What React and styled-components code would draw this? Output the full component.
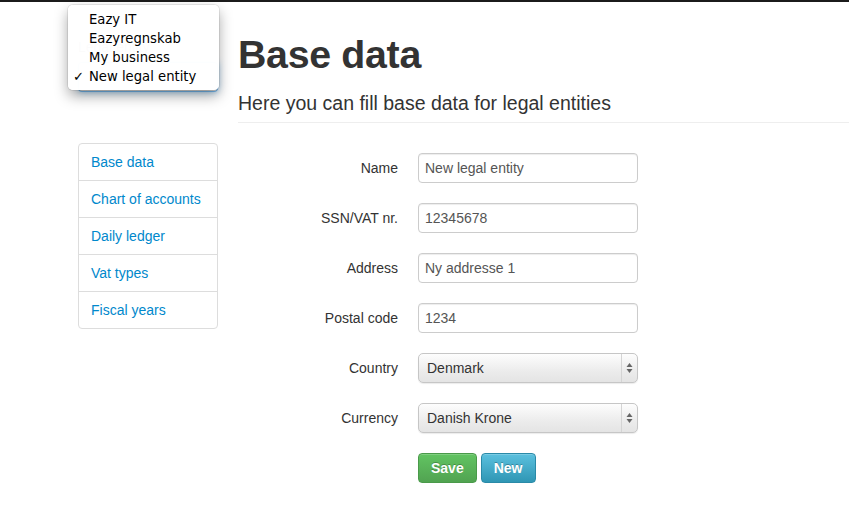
import styled, { createGlobalStyle } from 'styled-components';

const GlobalStyle = createGlobalStyle`
  html, body { margin: 0; padding: 0; background: #fff; }
  body {
    font-family: "Liberation Sans", Arial, sans-serif;
    font-size: 14px;
    line-height: 20px;
    color: #333;
    overflow: hidden;
  }
`;

const TopBar = styled.div`
  height: 2px;
  background: #1b1b1b;
`;

const Page = styled.div`
  display: flex;
  gap: 20px;
  padding-left: 78px;
`;

const Sidebar = styled.div`
  position: relative;
  width: 140px;
  flex: none;
  padding-top: 35px;
`;

const SideLabel = styled.div`
  color: #555;
  height: 20px;
  margin-bottom: 5px;
`;

const EntitySelect = styled.div`
  height: 30px;
  box-sizing: border-box;
  border: 1px solid rgba(82, 168, 236, 0.8);
  border-radius: 4px;
  background: linear-gradient(#fff, #e9e9e9);
  box-shadow: 0 0 6px rgba(82, 168, 236, 0.6);
`;

const Popup = styled.ul`
  position: absolute;
  left: -10px;
  top: 3px;
  width: 151px;
  box-sizing: border-box;
  margin: 0;
  padding: 5px 0 4px;
  list-style: none;
  background: rgba(255, 255, 255, 0.98);
  border-radius: 5px;
  box-shadow: 0 0 0 1px rgba(0, 0, 0, 0.08), 0 6px 14px rgba(0, 0, 0, 0.35);
  font-family: "DejaVu Sans", sans-serif;
  font-size: 13.2px;
  line-height: 19px;
  color: #000;
  z-index: 5;
`;

const PopupItem = styled.li`
  position: relative;
  padding-left: 21px;
  white-space: nowrap;
`;

const Check = styled.span`
  position: absolute;
  left: 5px;
  top: 0;
`;

const NavList = styled.ul`
  margin: 51px 0 0;
  padding: 0;
  list-style: none;
  border: 1px solid #ddd;
  border-radius: 4px;
  overflow: hidden;
`;

const NavItem = styled.li`
  border-top: ${p => (p.$first ? 'none' : '1px solid #ddd')};
  a {
    display: block;
    padding: 8px 12px;
    color: #0088cc;
    text-decoration: none;
  }
`;

const Main = styled.div`
  flex: 1;
  min-width: 0;
`;

const Header = styled.div`
  padding-top: 32px;
  padding-bottom: 7px;
  border-bottom: 1px solid #eee;
  margin-right: -20px;
`;

const Title = styled.h1`
  margin: 0;
  font-size: 39.3px;
  line-height: 40px;
  font-weight: bold;
  color: #333;
  letter-spacing: -0.3px;
`;

const Subtitle = styled.div`
  margin-top: 17px;
  font-size: 19.5px;
  line-height: 24px;
  color: #333;
`;

const Form = styled.form`
  margin-top: 30px;
`;

const Group = styled.div`
  display: flex;
  margin-bottom: 20px;
`;

const Label = styled.label`
  width: 160px;
  padding-top: 5px;
  margin-right: 20px;
  text-align: right;
  color: #333;
`;

const Input = styled.input`
  width: 220px;
  height: 30px;
  box-sizing: border-box;
  padding: 4px 6px;
  border: 1px solid #ccc;
  border-radius: 4px;
  box-shadow: inset 0 1px 1px rgba(0, 0, 0, 0.075);
  font-family: inherit;
  font-size: 14px;
  color: #555;
  outline: none;
`;

const Select = styled.div`
  width: 220px;
  height: 30px;
  box-sizing: border-box;
  display: flex;
  align-items: center;
  border: 1px solid #c6c6c6;
  border-radius: 5px;
  background: linear-gradient(#fdfdfd, #ececec 60%, #e4e4e4);
  box-shadow: 0 1px 1px rgba(0, 0, 0, 0.08);
  color: #333;
`;

const SelectValue = styled.span`
  flex: 1;
  padding-left: 8px;
`;

const Arrows = styled.span`
  width: 15px;
  height: 100%;
  border-left: 1px solid #d4d4d4;
  display: flex;
  align-items: center;
  justify-content: center;
`;

const Buttons = styled.div`
  display: flex;
  gap: 4px;
  margin-left: 180px;
`;

const Button = styled.button`
  height: 30px;
  box-sizing: border-box;
  padding: 4px 12px;
  font-family: inherit;
  font-size: 14px;
  font-weight: bold;
  color: #fff;
  text-shadow: 0 -1px 0 rgba(0, 0, 0, 0.25);
  border-radius: 4px;
  border: 1px solid ${p => (p.$variant === 'success' ? '#4a9a4a' : '#2a8aa8')};
  background: ${p =>
    p.$variant === 'success'
      ? 'linear-gradient(#62c462, #51a351)'
      : 'linear-gradient(#5bc0de, #2f96b4)'};
  box-shadow: inset 0 1px 0 rgba(255, 255, 255, 0.2);
`;

const SelectArrows = () => (
  <svg width="7" height="12" viewBox="0 0 7 12">
    <path d="M3.5 1 L6.5 5 H0.5 Z" fill="#666" />
    <path d="M3.5 11 L6.5 7 H0.5 Z" fill="#666" />
  </svg>
);

const fields = [
  { label: 'Name', value: 'New legal entity' },
  { label: 'SSN/VAT nr.', value: '12345678' },
  { label: 'Address', value: 'Ny addresse 1' },
  { label: 'Postal code', value: '1234' },
];

const selects = [
  { label: 'Country', value: 'Denmark' },
  { label: 'Currency', value: 'Danish Krone' },
];

const entities = ['Eazy IT', 'Eazyregnskab', 'My business', 'New legal entity'];
const nav = ['Base data', 'Chart of accounts', 'Daily ledger', 'Vat types', 'Fiscal years'];

const App = () => {
  return (
    <>
      <GlobalStyle />
      <TopBar />
      <Page>
        <Sidebar>
          <SideLabel>Legal entity</SideLabel>
          <EntitySelect />
          <Popup>
            {entities.map((e, i) => (
              <PopupItem key={e}>
                {i === entities.length - 1 && <Check>✓</Check>}
                {e}
              </PopupItem>
            ))}
          </Popup>
          <NavList>
            {nav.map((n, i) => (
              <NavItem key={n} $first={i === 0}>
                <a href="#">{n}</a>
              </NavItem>
            ))}
          </NavList>
        </Sidebar>
        <Main>
          <Header>
            <Title>Base data</Title>
            <Subtitle>Here you can fill base data for legal entities</Subtitle>
          </Header>
          <Form>
            {fields.map(f => (
              <Group key={f.label}>
                <Label>{f.label}</Label>
                <Input defaultValue={f.value} />
              </Group>
            ))}
            {selects.map(s => (
              <Group key={s.label}>
                <Label>{s.label}</Label>
                <Select>
                  <SelectValue>{s.value}</SelectValue>
                  <Arrows>
                    <SelectArrows />
                  </Arrows>
                </Select>
              </Group>
            ))}
            <Buttons>
              <Button type="button" $variant="success">Save</Button>
              <Button type="button" $variant="info">New</Button>
            </Buttons>
          </Form>
        </Main>
      </Page>
    </>
  );
};

export default App;
